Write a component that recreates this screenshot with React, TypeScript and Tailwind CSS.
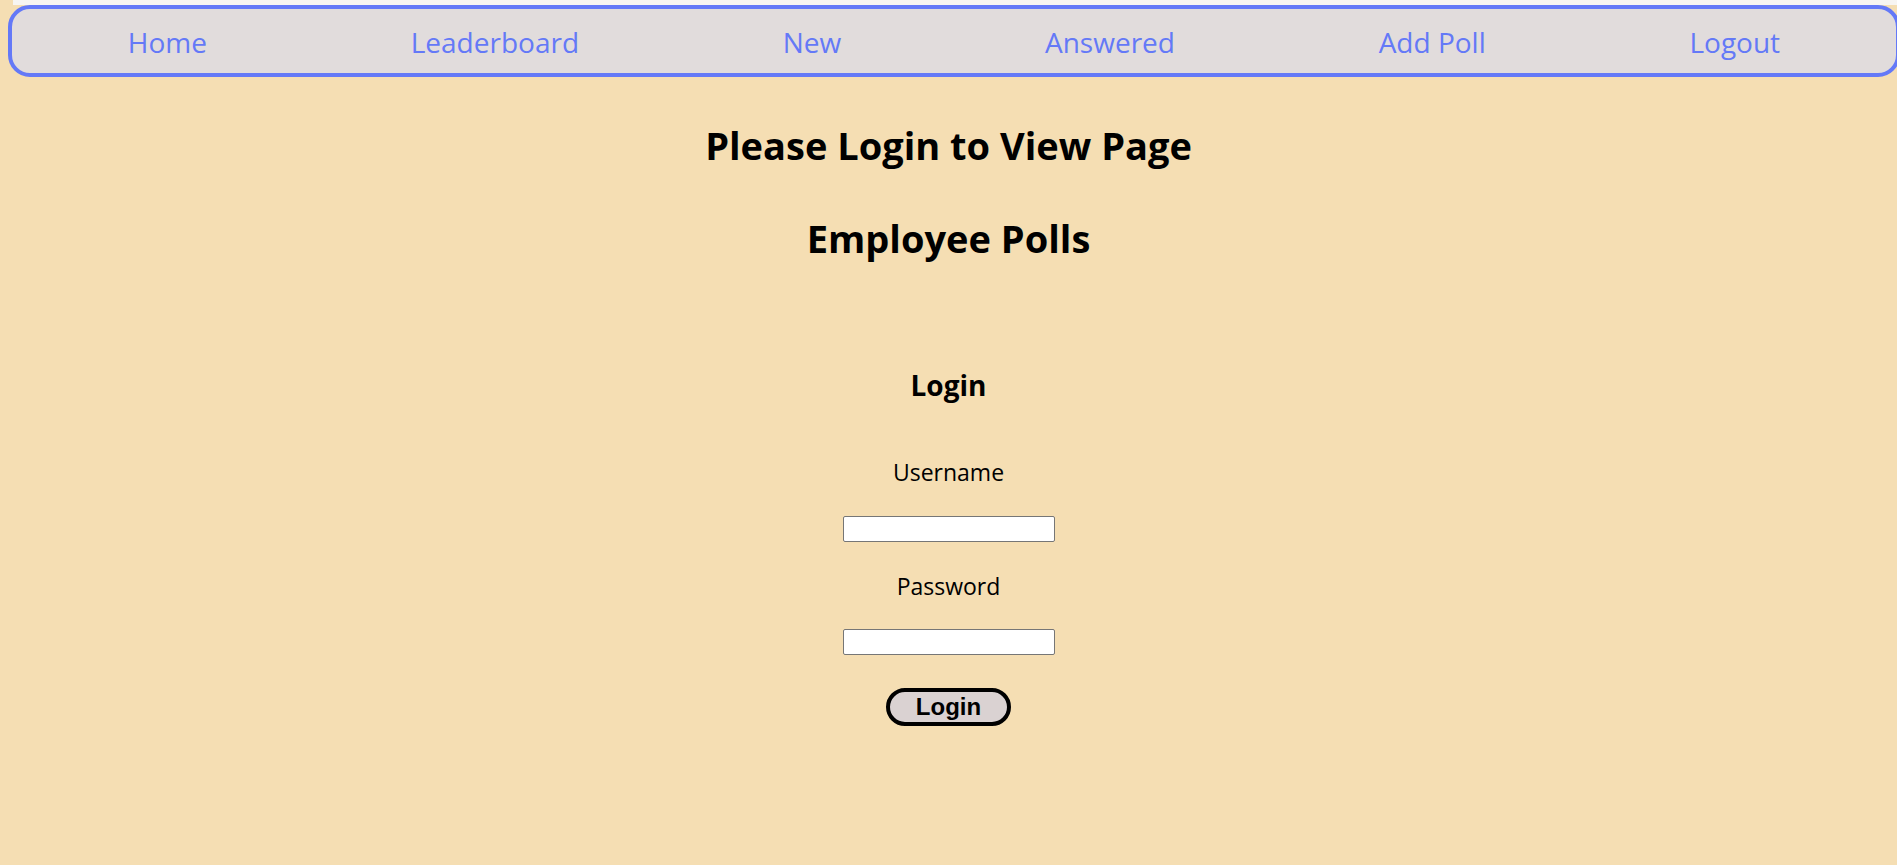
const links = ["Home", "Leaderboard", "New", "Answered", "Add Poll", "Logout"];

function Nav() {
  return (
    <div>
      <div className="flex h-[5px]">
        <div className="w-[13px] bg-[#f5deb3]" />
        <div className="flex-1 bg-[#f7f5f2]" />
      </div>
      <nav className="ml-[8px] -mr-[3px] flex h-[72px] items-center justify-around rounded-[22px] border-[4px] border-[#6479f7] bg-[#e1dcdc] px-[14px] pt-[1px]">
        {links.map((label) => (
          <a
            key={label}
            href="#"
            className="text-[28px] leading-[36px] text-[#6479f7] no-underline"
          >
            {label}
          </a>
        ))}
      </nav>
    </div>
  );
}

function LoginForm() {
  return (
    <div className="flex flex-col items-center">
      <h3 className="mt-[106px] text-[28px] font-bold leading-[34px]">Login</h3>
      <label className="mt-[55px] text-[23px] leading-[30px]">Username</label>
      <input
        type="text"
        className="mt-[29px] h-[26px] w-[212px] rounded-[2px] border border-[#767676] bg-white px-1"
      />
      <label className="mt-[29px] text-[23px] leading-[30px]">Password</label>
      <input
        type="password"
        className="mt-[28px] h-[26px] w-[212px] rounded-[2px] border border-[#767676] bg-white px-1"
      />
      <button className="mt-[33px] h-[38px] w-[125px] rounded-full border-[4px] border-black bg-[#dad2d2] font-['Liberation_Sans',Arial,sans-serif] text-[24px] font-bold leading-none text-black">
        Login
      </button>
    </div>
  );
}

export default function App() {
  return (
    <div className="min-h-[865px] overflow-hidden bg-[#f5deb3] font-['Open_Sans','Noto_Sans',sans-serif] text-black">
      <Nav />
      <div className="flex flex-col items-center">
        <h1 className="mt-[44px] text-[38px] font-bold leading-[48px]">Please Login to View Page</h1>
        <h2 className="mt-[45px] text-[38px] font-bold leading-[48px]">Employee Polls</h2>
      </div>
      <LoginForm />
    </div>
  );
}
